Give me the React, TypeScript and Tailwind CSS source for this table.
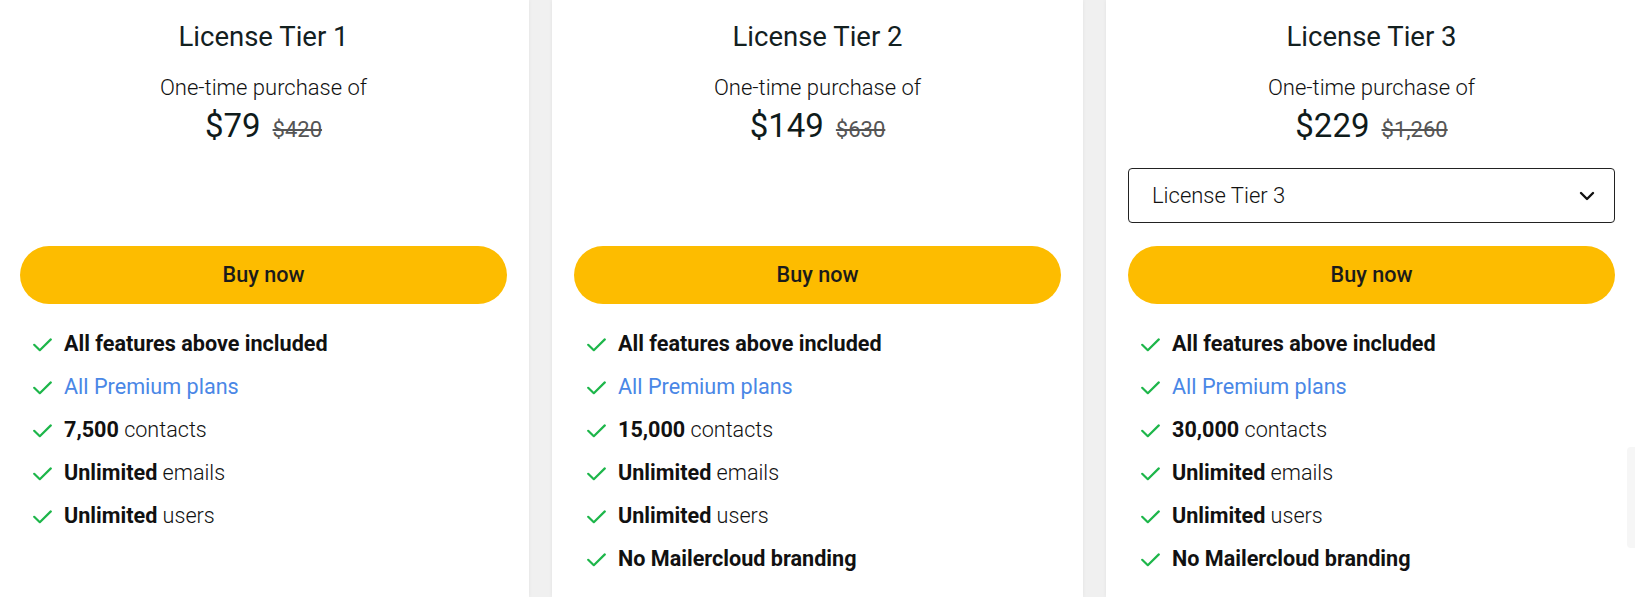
import React from 'react';

type Feature = { bold?: string; text?: string; link?: boolean };

interface Tier {
  name: string;
  price: string;
  was: string;
  select?: boolean;
  features: Feature[];
}

const tiers: Tier[] = [
  {
    name: 'License Tier 1',
    price: '$79',
    was: '$420',
    features: [
      { bold: 'All features above included' },
      { text: 'All Premium plans', link: true },
      { bold: '7,500', text: ' contacts' },
      { bold: 'Unlimited', text: ' emails' },
      { bold: 'Unlimited', text: ' users' },
    ],
  },
  {
    name: 'License Tier 2',
    price: '$149',
    was: '$630',
    features: [
      { bold: 'All features above included' },
      { text: 'All Premium plans', link: true },
      { bold: '15,000', text: ' contacts' },
      { bold: 'Unlimited', text: ' emails' },
      { bold: 'Unlimited', text: ' users' },
      { bold: 'No Mailercloud branding' },
    ],
  },
  {
    name: 'License Tier 3',
    price: '$229',
    was: '$1,260',
    select: true,
    features: [
      { bold: 'All features above included' },
      { text: 'All Premium plans', link: true },
      { bold: '30,000', text: ' contacts' },
      { bold: 'Unlimited', text: ' emails' },
      { bold: 'Unlimited', text: ' users' },
      { bold: 'No Mailercloud branding' },
    ],
  },
];

const Check = () => (
  <svg width="19" height="14" viewBox="0 0 19 14" fill="none" className="shrink-0">
    <polyline points="1.2,6.8 6.8,12.2 17.8,1.4" stroke="#1db64a" strokeWidth="2.2" strokeLinecap="round" strokeLinejoin="round" />
  </svg>
);

const TierCard = ({ tier }: { tier: Tier }) => (
  <div className="w-[531px] shrink-0 bg-white px-[22px] pt-[21px] shadow-[0_0_4px_rgba(0,0,0,0.06)]">
    <div className="flex flex-col items-center">
      <h3 className="text-[27.5px] leading-[32px] font-normal text-[#13201f]">{tier.name}</h3>
      <p className="mt-[21px] text-[22px] leading-[28px] font-light text-[#111]">One-time purchase of</p>
      <div className="mt-[6px] flex items-baseline h-[36px]">
        <span className="text-[33px] leading-[36px] text-[#0f1b1b]">{tier.price}</span>
        <span className="ml-[12px] text-[22px] text-[#555] line-through">{tier.was}</span>
      </div>
    </div>

    {/* tier picker, only on the last card */}
    <div className="mt-[24px] h-[55px]">
      {tier.select && (
        <div className="flex h-full items-center justify-between rounded-[4px] border border-[#222] pl-[23px] pr-[19px]">
          <span className="text-[22px] font-light text-[#111]">{tier.name}</span>
          <svg width="16" height="10" viewBox="0 0 16 10" fill="none">
            <polyline points="2,2 8,8 14,2" stroke="#111" strokeWidth="2.4" strokeLinecap="round" strokeLinejoin="round" />
          </svg>
        </div>
      )}
    </div>

    <button className="mt-[23px] h-[58px] w-full rounded-full bg-[#fdbc00] text-[21.6px] font-medium text-[#1b1b1b]">
      Buy now
    </button>

    <ul className="mt-[19px] pl-[13px]">
      {tier.features.map((f, i) => (
        <li key={i} className="flex h-[43px] items-center gap-[12px] text-[21.6px]">
          <Check />
          {f.link ? (
            <span className="font-normal text-[#4a87e6]">{f.text}</span>
          ) : (
            <span className="text-[#111]">
              {f.bold && <span className="font-bold">{f.bold}</span>}
              {f.text && <span className="font-light">{f.text}</span>}
            </span>
          )}
        </li>
      ))}
    </ul>
  </div>
);

export default function App() {
  return (
    <div className="relative h-[597px] w-full overflow-hidden bg-[#f0f0f0] font-['Roboto',sans-serif]">
      <div className="-ml-[2px] flex h-full gap-[23px]">
        {tiers.map((t) => (
          <TierCard key={t.name} tier={t} />
        ))}
      </div>
      <div className="absolute right-0 top-[447px] h-[101px] w-[8px] rounded-l-[4px] bg-[#f6f6f6]" />
    </div>
  );
}
